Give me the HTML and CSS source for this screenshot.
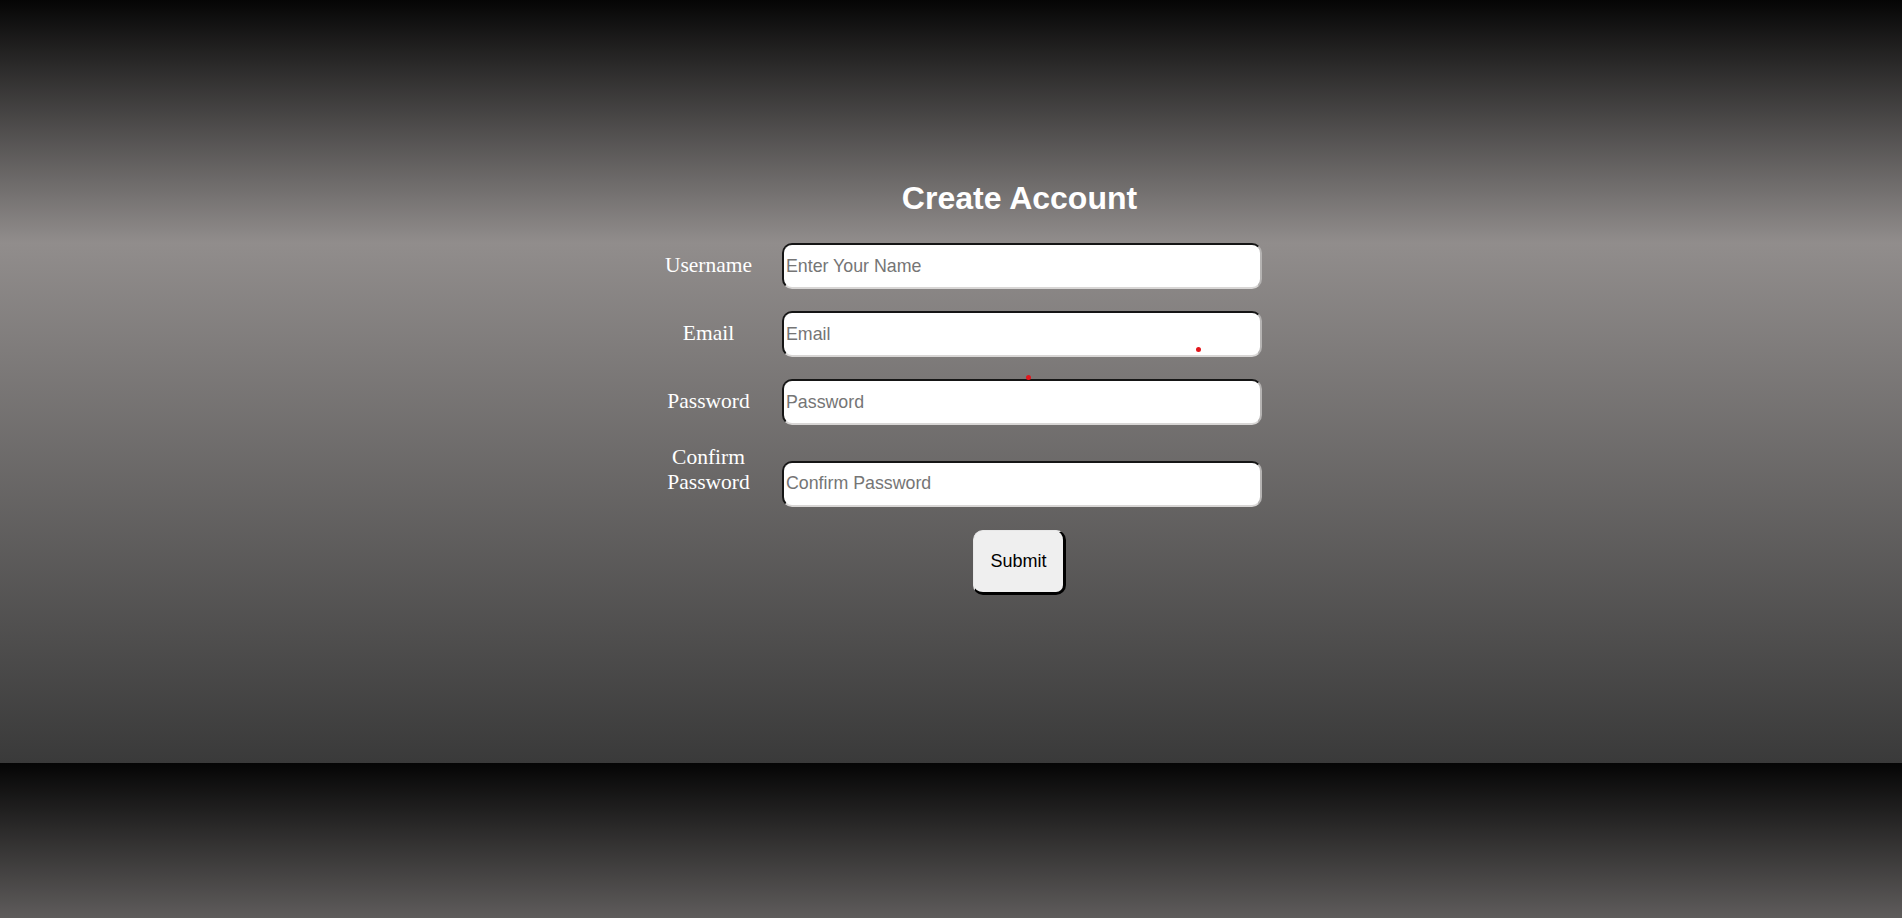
FILE: index.html
```html
<!DOCTYPE html>
<html lang="en">
<head>
<meta charset="utf-8">
<title>Create Account</title>
<link rel="stylesheet" href="styles.css">
</head>
<body>
<div class="page">
  <form class="form">
    <h1 class="title">Create Account</h1>
    <div class="row">
      <label class="label" for="u">Username</label>
      <input class="field" id="u" type="text" placeholder="Enter Your Name">
    </div>
    <div class="row">
      <label class="label" for="e">Email</label>
      <input class="field" id="e" type="email" placeholder="Email">
    </div>
    <div class="row">
      <label class="label" for="p">Password</label>
      <input class="field" id="p" type="password" placeholder="Password">
    </div>
    <div class="row row-tall">
      <label class="label" for="c">Confirm Password</label>
      <input class="field" id="c" type="password" placeholder="Confirm Password">
    </div>
    <div class="actions">
      <button class="submit" type="button">Submit</button>
    </div>
  </form>
  <span class="dot dot-a"></span>
  <span class="dot dot-b"></span>
</div>
</body>
</html>
```
FILE: styles.css
```css
html {
  margin: 0;
  min-height: 100%;
  background-color: #3a3a3a;
  background-image: linear-gradient(to bottom, #050505 0px, #918d8c 243px, #3a3a3a 763px);
  background-size: 100% 763px;
  background-repeat: repeat-y;
}

body {
  margin: 0;
}

.page {
  position: relative;
  height: 763px;
  padding-top: 180px;
  box-sizing: border-box;
}

.form {
  width: 622px;
  margin: 0 auto;
  display: flex;
  flex-direction: column;
  gap: 22px;
}

.title {
  margin: 0 0 4px 137px;
  width: 485px;
  text-align: center;
  font-family: "Liberation Sans", Arial, sans-serif;
  font-weight: bold;
  font-size: 32px;
  line-height: 37px;
  color: #ffffff;
}

.row {
  display: flex;
  align-items: last baseline;
}

.row-tall {
  margin-top: -2px;
}

.label {
  width: 137px;
  flex: none;
  text-align: center;
  font-family: "Liberation Serif", "Times New Roman", serif;
  font-size: 21.5px;
  color: #ffffff;
}

.field {
  margin-left: 5px;
  width: 480px;
  height: 46px;
  box-sizing: border-box;
  padding: 1px 2px;
  border-style: solid;
  border-width: 2px;
  border-color: #151515 #b5b3b2 #d8d6d5 #151515;
  border-radius: 10px;
  background: #ffffff;
  font-family: "Liberation Sans", Arial, sans-serif;
  font-size: 17.8px;
  color: #222;
  outline: none;
}

.field::placeholder {
  color: #757575;
}

.actions {
  margin: 1px 0 0 137px;
  width: 485px;
  display: flex;
  justify-content: center;
}

.submit {
  padding: 20px 16px;
  border-style: solid;
  border-width: 1px 3px 3px 1px;
  border-color: #e8e8e8 #000000 #000000 #e8e8e8;
  border-radius: 10px;
  background: #efefef;
  font-family: "Liberation Sans", Arial, sans-serif;
  font-size: 18px;
  color: #000000;
  line-height: 21px;
}

.dot {
  position: absolute;
  width: 5px;
  height: 5px;
  border-radius: 50%;
  background: #e3161c;
}

.dot-a {
  left: 1196px;
  top: 347px;
}

.dot-b {
  left: 1026px;
  top: 375px;
}
```
